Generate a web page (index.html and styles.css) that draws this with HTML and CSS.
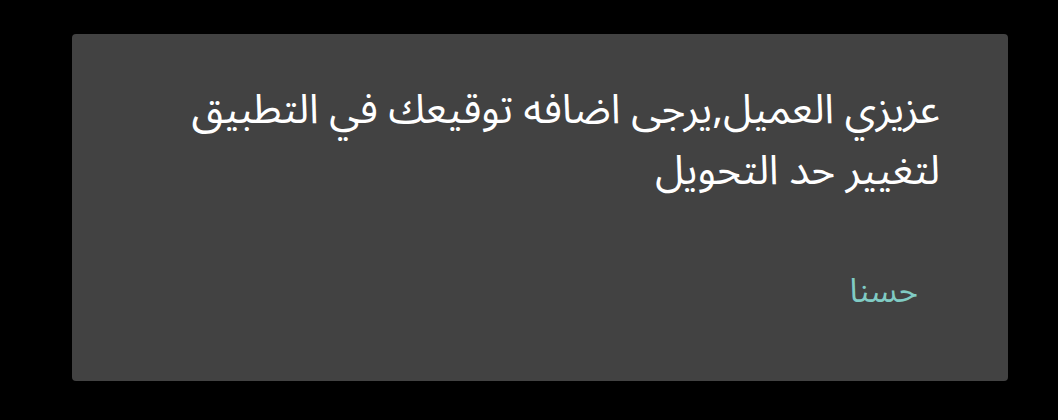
FILE: index.html
```html
<!DOCTYPE html>
<html lang="ar" dir="rtl">
<head>
<meta charset="utf-8">
<link rel="stylesheet" href="styles.css">
</head>
<body>
<div class="screen">
  <div class="dialog">
    <p class="message">عزيزي العميل,يرجى اضافه توقيعك في التطبيق لتغيير حد التحويل</p>
    <div class="actions">
      <button class="btn">حسنا</button>
    </div>
  </div>
</div>
</body>
</html>
```
FILE: styles.css
```css
html, body {
  margin: 0;
  padding: 0;
  background: #000;
}
.screen {
  width: 1058px;
  height: 420px;
  box-sizing: border-box;
  padding: 34px 50px 0 72px;
  direction: ltr;
}
.dialog {
  direction: rtl;
  width: 936px;
  height: 347px;
  box-sizing: border-box;
  background: #424242;
  border-radius: 4px;
  padding: 46px 68px 0 68px;
  display: flex;
  flex-direction: column;
}
.message {
  margin: 0;
  color: #fff;
  font-family: "Noto Sans Arabic", "DejaVu Sans", sans-serif;
  font-size: 41px;
  line-height: 61px;
  text-align: right;
}
.actions {
  display: flex;
  justify-content: flex-start;
  margin-top: 70px;
  padding-right: 22px;
}
.btn {
  background: none;
  border: none;
  padding: 0;
  color: #80cbc4;
  font-family: "Noto Sans Arabic", "DejaVu Sans", sans-serif;
  font-size: 33px;
  line-height: 40px;
}
```
